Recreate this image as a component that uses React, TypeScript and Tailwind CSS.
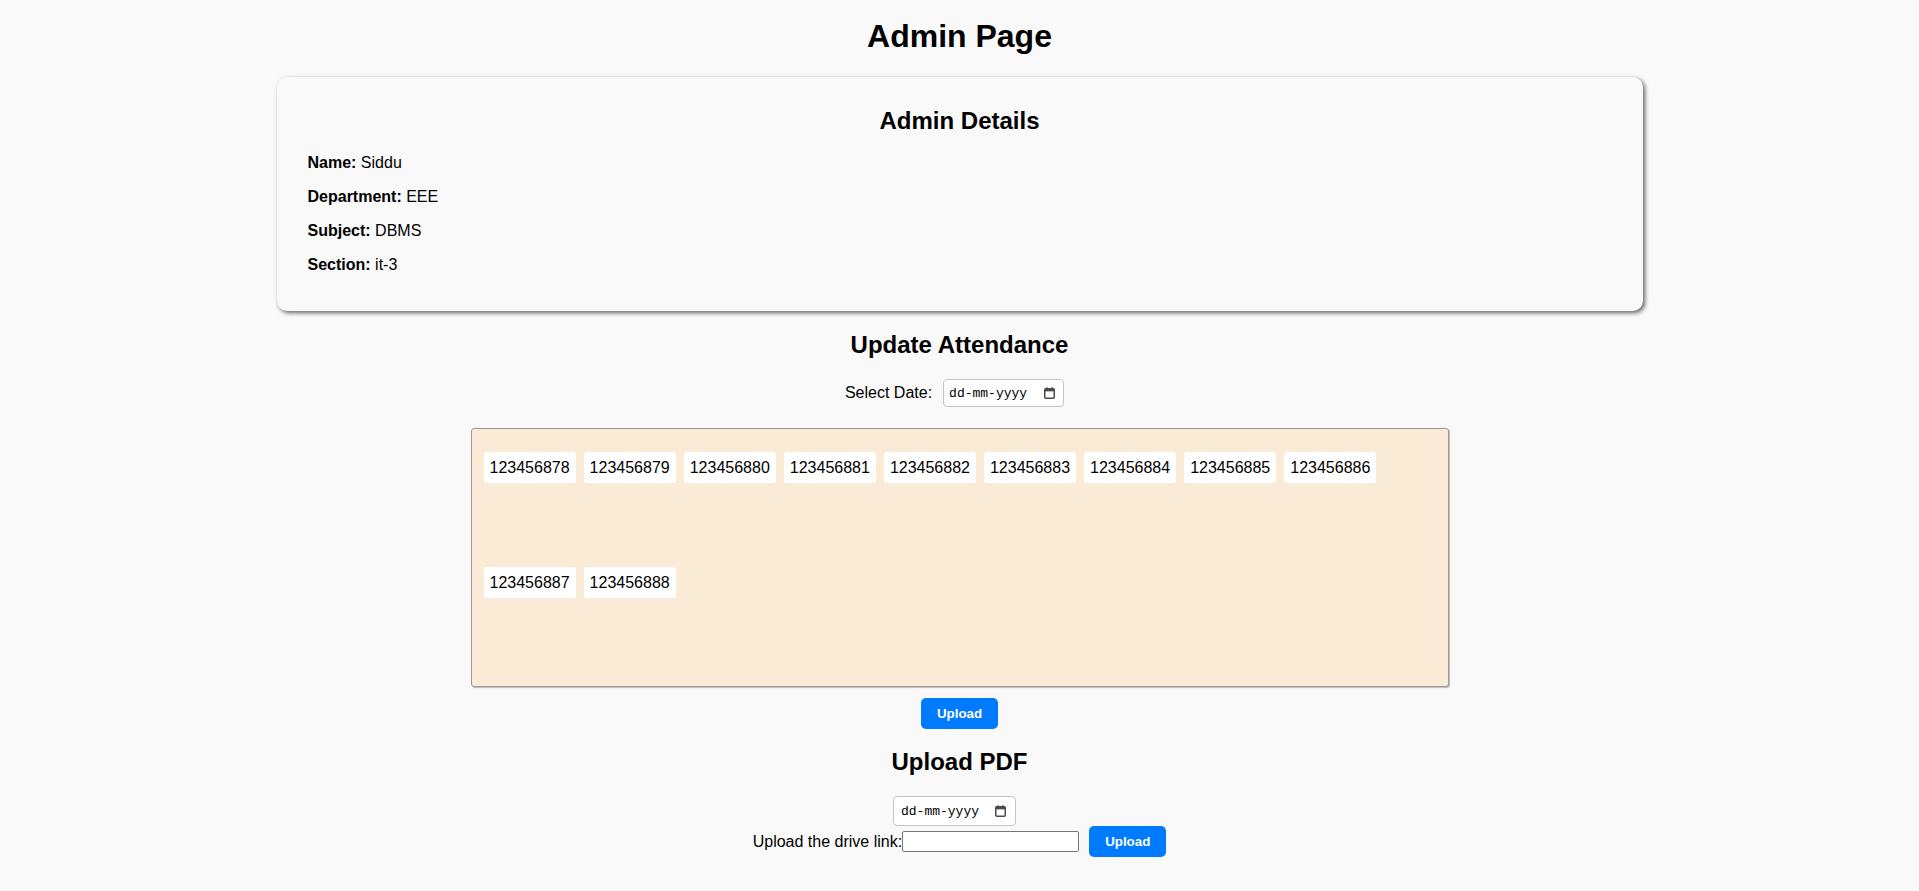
import React from 'react';

const admin = [
  { label: 'Name:', value: 'Siddu' },
  { label: 'Department:', value: 'EEE' },
  { label: 'Subject:', value: 'DBMS' },
  { label: 'Section:', value: 'it-3' },
];

const rollNumbers = [
  '123456878', '123456879', '123456880', '123456881', '123456882', '123456883',
  '123456884', '123456885', '123456886', '123456887', '123456888',
];

// chrome style calendar glyph for the fake date picker
const CalendarIcon = () => (
  <svg width="11" height="12" viewBox="0 0 11 12">
    <rect x="0.75" y="1.75" width="9.5" height="9.5" rx="1" fill="none" stroke="#4a4a4a" strokeWidth="1.5" />
    <rect x="0.75" y="1.75" width="9.5" height="2.6" fill="#4a4a4a" />
    <rect x="2.2" y="0.3" width="1.5" height="2" fill="#4a4a4a" />
    <rect x="7.3" y="0.3" width="1.5" height="2" fill="#4a4a4a" />
  </svg>
);

const DateBox = ({ className }: { className: string }) => (
  <div className={`flex items-center justify-between bg-white border border-[#c4c4c4] rounded-[4px] box-border ${className}`}>
    <span className="font-['Liberation_Mono',monospace] text-[13px] leading-none text-black">dd-mm-yyyy</span>
    <CalendarIcon />
  </div>
);

const UploadButton = ({ className = '' }: { className?: string }) => (
  <button className={`bg-[#007bff] text-white font-bold text-[13.33px] leading-[15px] px-[16px] h-[31px] rounded-[5px] ${className}`}>
    Upload
  </button>
);

export default function App() {
  return (
    <div className="min-h-screen bg-[#f9f9f9] text-black font-['Liberation_Sans',Arial,sans-serif] flex flex-col items-center pb-[34px]">
      <h1 className="text-[32px] font-bold leading-[37px] mt-[18px]">Admin Page</h1>

      <div className="w-[1366px] mt-[22px] bg-[#f9f9f9] rounded-[10px] shadow-[2px_2px_4px_rgba(0,0,0,0.6)] pt-[30px] pb-[37px] px-[31px] box-border">
        <h2 className="text-center text-[24px] font-bold leading-[27px]">Admin Details</h2>
        <div className="flex flex-col gap-[16px] mt-[20px]">
          {admin.map((row) => (
            <p key={row.label} className="text-[16px] leading-[18px]">
              <strong>{row.label}</strong> {row.value}
            </p>
          ))}
        </div>
      </div>

      <h2 className="text-[24px] font-bold leading-[27px] mt-[20px]">Update Attendance</h2>
      <div className="flex items-center mt-[21px]">
        <span className="text-[16px] mr-[11px]">Select Date:</span>
        <DateBox className="w-[121px] h-[28px] pl-[5px] pr-[8px] mr-[10px]" />
      </div>

      <div className="w-[978px] h-[259px] mt-[21px] box-border border border-[#9a9a9a] rounded-[3px] bg-[#faebd7] shadow-[1px_1px_1px_rgba(0,0,0,0.25)] pl-[12px] pt-[23px] flex flex-wrap content-start gap-x-[8px] gap-y-[84px]">
        {rollNumbers.map((r) => (
          <div key={r} className="bg-white rounded-[3px] h-[31px] px-[6px] flex items-center text-[16px]">
            {r}
          </div>
        ))}
      </div>

      <UploadButton className="mt-[11px]" />

      <h2 className="text-[24px] font-bold leading-[27px] mt-[19px]">Upload PDF</h2>
      <DateBox className="w-[123px] h-[30px] pl-[7px] pr-[9px] mt-[21px] mr-[10px]" />
      <div className="flex items-center h-[31px]">
        <span className="text-[16px]">Upload the drive link:</span>
        <input type="text" className="w-[177px] h-[21px] box-border border border-[#767676] rounded-[2px] bg-white px-[2px] text-[13px]" />
        <UploadButton className="ml-[10px]" />
      </div>
    </div>
  );
}
